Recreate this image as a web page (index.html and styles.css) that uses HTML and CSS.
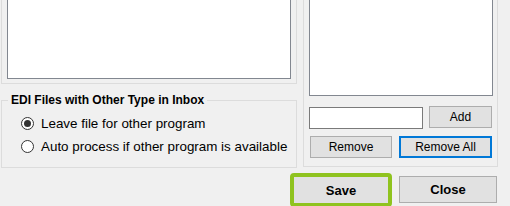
FILE: index.html
```html
<!DOCTYPE html>
<html lang="en">
<head>
  <meta charset="UTF-8" />
  <title>EDI Settings</title>
  <link rel="stylesheet" href="styles.css">
</head>
<body>

  <div class="window">
    <div class="columns">
      <div class="left-col">
        <div class="group list-group">
          <div class="listbox"></div>
        </div>

        <fieldset class="edi-group">
          <legend>EDI Files with Other Type in Inbox</legend>
          <label class="radio-row">
            <input type="radio" name="other" checked>
            <span>Leave file for other program</span>
          </label>
          <label class="radio-row">
            <input type="radio" name="other">
            <span>Auto process if other program is available</span>
          </label>
        </fieldset>
      </div>

      <div class="right-col">
        <div class="group ext-group">
          <div class="listbox small"></div>
          <div class="add-row">
            <input type="text" class="textbox">
            <button class="btn btn-add">Add</button>
          </div>
          <div class="remove-row">
            <button class="btn btn-remove">Remove</button>
            <button class="btn btn-remove-all">Remove All</button>
          </div>
        </div>
      </div>
    </div>

    <!-- botones de abajo -->
    <div class="footer">
      <button class="btn btn-save">Save</button>
      <button class="btn btn-close">Close</button>
    </div>
  </div>

</body>
</html>
```

FILE: styles.css
```css
body {
  margin: 0;
  font-family: 'Liberation Sans', Arial, sans-serif;
  background-color: #f0f0f0;
  color: #000;
}

.window {
  width: 510px;
  height: 206px;
  overflow: hidden;
}

.columns {
  display: flex;
  gap: 6px;
}

.left-col {
  width: 296px;
  margin-left: 1px;
}

.right-col {
  width: 195px;
}

.group {
  border: 1px solid #dcdcdc;
  border-top: none;
}

.list-group {
  padding: 0 5px 4px 5px;
}

.listbox {
  height: 78px;
  background-color: #fff;
  border: 1px solid #828790;
  border-top: none;
}

/* Grupo de opciones */
.edi-group {
  margin: 9px 0 0 0;
  padding: 5px 0 9px 0;
  border: 1px solid #dcdcdc;
}

.edi-group legend {
  margin-left: 6px;
  padding: 0 3px;
  font-size: 12px;
  font-weight: bold;
  line-height: 14px;
}

.radio-row {
  display: flex;
  align-items: center;
  height: 23px;
  padding-left: 19px;
  font-size: 13.4px;
}

.radio-row input {
  appearance: none;
  width: 13px;
  height: 13px;
  margin: 0 7px 0 0;
  border: 1px solid #333;
  border-radius: 50%;
  background-color: #fff;
  display: flex;
  align-items: center;
  justify-content: center;
}

.radio-row input:checked::after {
  content: '';
  width: 7px;
  height: 7px;
  border-radius: 50%;
  background-color: #333;
}

.ext-group {
  padding: 0 4px 8px 5px;
}

.listbox.small {
  height: 95px;
}

.add-row {
  display: flex;
  gap: 6px;
  margin-top: 10px;
  height: 23px;
}

.textbox {
  width: 114px;
  height: 22px;
  margin: 1px 0 0 0;
  padding: 0;
  box-sizing: border-box;
  border: 1px solid #7a7a7a;
  background-color: #fff;
}

.remove-row {
  display: flex;
  gap: 7px;
  margin-top: 7px;
  padding-left: 1px;
}

.btn {
  height: 22px;
  padding: 0;
  box-sizing: border-box;
  background-color: #e1e1e1;
  border: 1px solid #adadad;
  font-family: 'Liberation Sans', Arial, sans-serif;
  font-size: 12px;
  color: #000;
}

.btn-add {
  width: 63px;
}

.btn-remove {
  width: 82px;
}

.btn-remove-all {
  width: 93px;
  border: 2px solid #0078d7;
}

.footer {
  display: flex;
  align-items: flex-start;
  gap: 7px;
  margin-top: 5px;
  padding-left: 290px;
}

.btn-save {
  width: 102px;
  height: 34px;
  border: 4px solid #8fc31f;
  border-radius: 4px;
  font-size: 13px;
  font-weight: bold;
}

.btn-close {
  width: 98px;
  height: 27px;
  margin-top: 3px;
  font-size: 13px;
  font-weight: bold;
}
```
